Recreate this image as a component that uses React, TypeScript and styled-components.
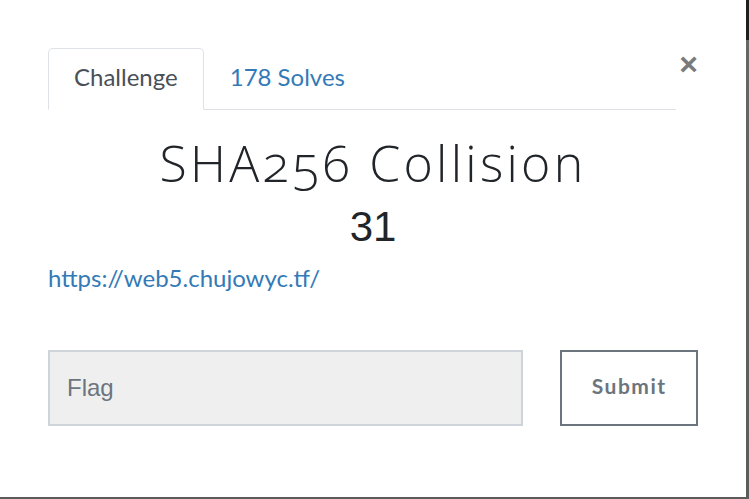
import React from "react";
import styled, { createGlobalStyle } from "styled-components";

const Global = createGlobalStyle`
  html, body { margin: 0; padding: 0; }
  body { width: 749px; height: 499px; overflow: hidden; background: #5f5f5f; }
`;

const Backdrop = styled.div`
  width: 749px;
  height: 499px;
  background: linear-gradient(to bottom, #1f1f1f 0, #1f1f1f 40px, #666 40px, #5c5c5c 100%);
`;

const Modal = styled.div`
  box-sizing: border-box;
  width: 746px;
  height: 497px;
  background: #fff;
  padding: 48px 48px 0 48px;
  display: flex;
  flex-direction: column;
  font-family: Lato, "Liberation Sans", sans-serif;
`;

const Header = styled.div`
  display: flex;
  align-items: flex-start;
`;

const TabBar = styled.div`
  width: 629px;
  display: flex;
  border-bottom: 1px solid #dee2e6;
`;

const Tab = styled.div<{ $active?: boolean }>`
  box-sizing: border-box;
  height: 62px;
  margin-bottom: -1px;
  padding: 0 25px 5px;
  display: flex;
  align-items: center;
  font-size: 24px;
  color: ${(p) => (p.$active ? "#495057" : "#337ab7")};
  border: 1px solid ${(p) => (p.$active ? "#dee2e6" : "transparent")};
  border-bottom-color: ${(p) => (p.$active ? "#fff" : "transparent")};
  border-radius: 5px 5px 0 0;
  background: ${(p) => (p.$active ? "#fff" : "transparent")};
`;

const Close = styled.div`
  margin-left: 3px;
  margin-top: 0;
  font-family: "Liberation Sans", Arial, sans-serif;
  font-weight: 700;
  font-size: 32px;
  line-height: 32px;
  color: #7a7a7a;
`;

const Title = styled.h1`
  margin: 24px 0 0;
  text-align: center;
  font-family: "Open Sans", sans-serif;
  font-weight: 300;
  font-size: 50px;
  line-height: 58px;
  letter-spacing: 3.3px;
  color: #212529;
  font-variant-numeric: oldstyle-nums;
`;

const Value = styled.div`
  margin: 11px 0 0;
  text-align: center;
  font-family: "Liberation Sans", Arial, sans-serif;
  font-size: 42px;
  line-height: 48px;
  color: #212529;
`;

const Link = styled.a`
  margin-top: 13px;
  align-self: flex-start;
  font-size: 24px;
  line-height: 28px;
  color: #337ab7;
  text-decoration: none;
`;

const FormRow = styled.div`
  margin-top: 58px;
  display: flex;
  align-items: flex-start;
  gap: 37px;
`;

const FlagInput = styled.input`
  box-sizing: border-box;
  width: 476px;
  height: 76px;
  border: 2px solid #ced4da;
  background: #efefef;
  padding: 0 17px;
  font-family: "Liberation Sans", Arial, sans-serif;
  font-size: 24px;
  color: #495057;
  outline: none;
  &::placeholder { color: #6c757d; opacity: 1; }
`;

const SubmitButton = styled.button`
  box-sizing: border-box;
  width: 138px;
  height: 76px;
  border: 2px solid #6c757d;
  background: #fff;
  font-family: Lato, sans-serif;
  font-weight: 700;
  font-size: 21px;
  letter-spacing: 1.5px;
  color: #6c757d;
  padding: 0 0 5px;
`;

export default function App() {
  return (
    <>
      <Global />
      <Backdrop>
        <Modal>
          <Header>
            <TabBar>
              <Tab $active>Challenge</Tab>
              <Tab>178 Solves</Tab>
            </TabBar>
            <Close>×</Close>
          </Header>
          <Title>SHA256 Collision</Title>
          <Value>31</Value>
          <Link href="#">https://web5.chujowyc.tf/</Link>
          <FormRow>
            <FlagInput placeholder="Flag" />
            <SubmitButton>Submit</SubmitButton>
          </FormRow>
        </Modal>
      </Backdrop>
    </>
  );
}
